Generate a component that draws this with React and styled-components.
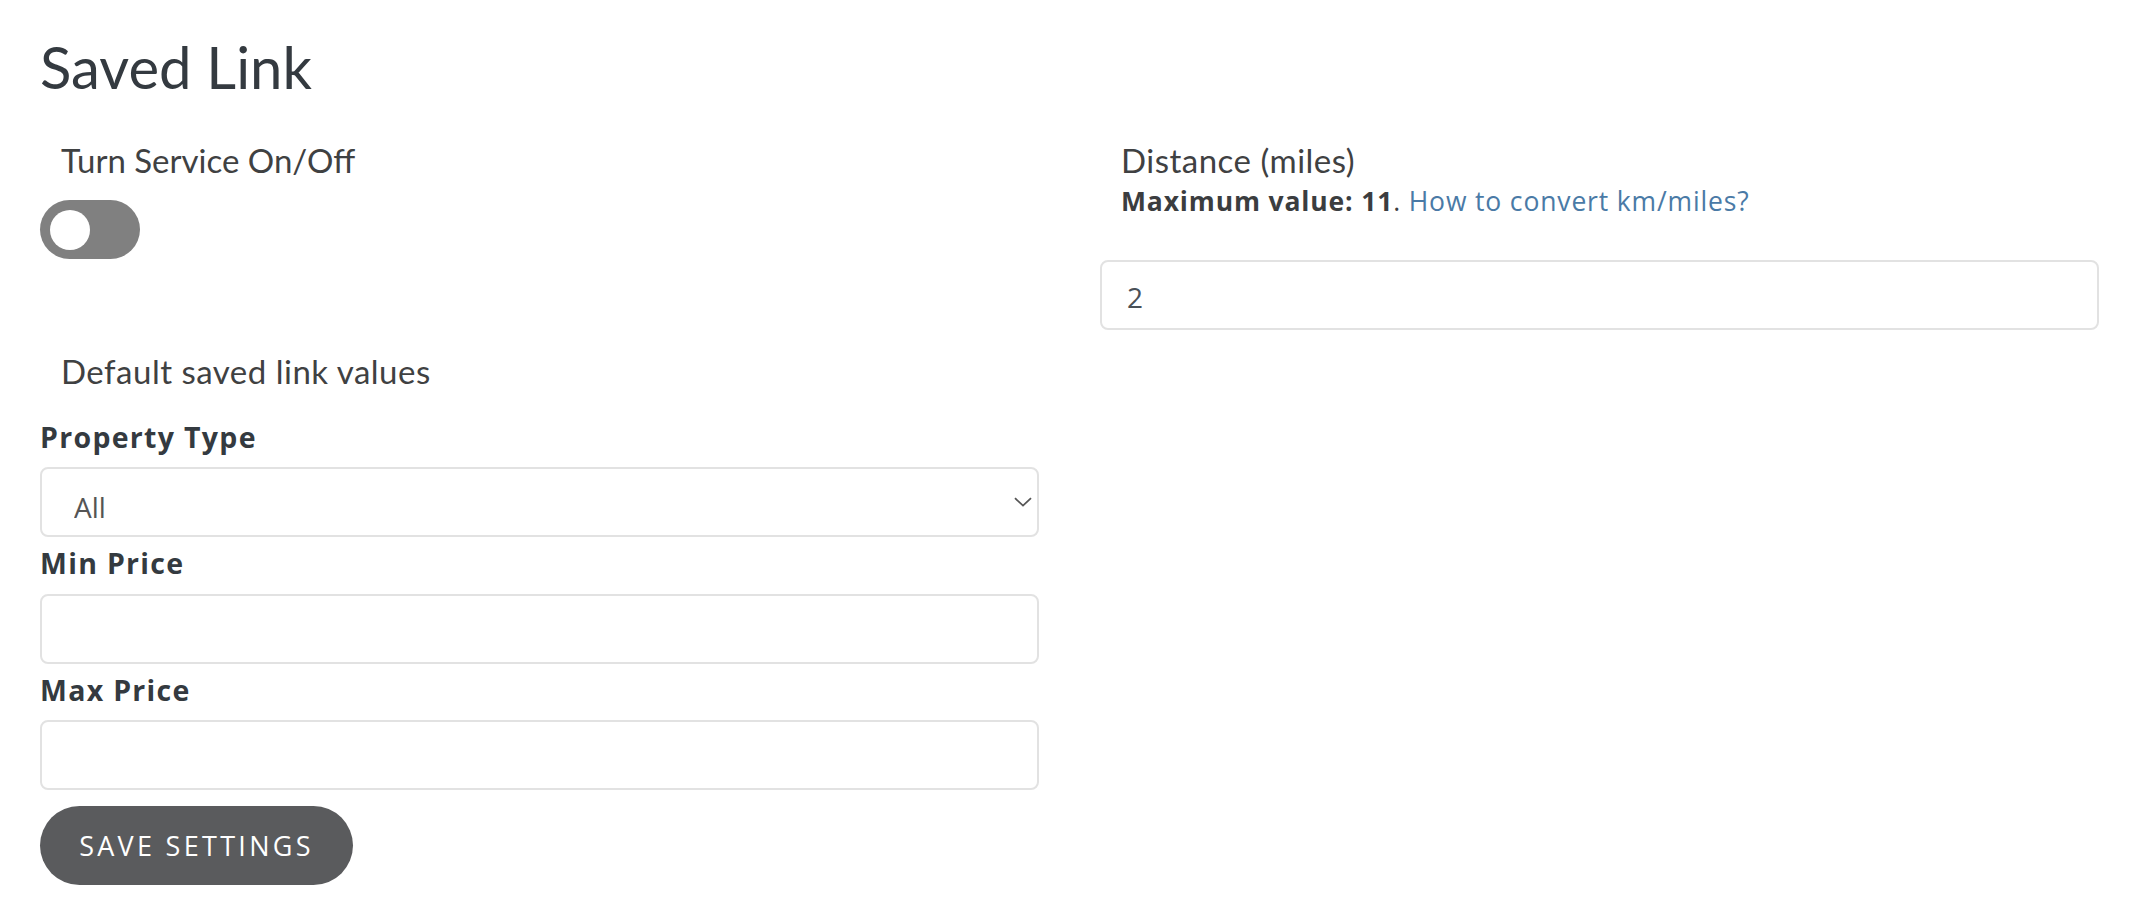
import React, { useState } from "react";
import styled, { createGlobalStyle } from "styled-components";

const GlobalStyle = createGlobalStyle`
  html, body {
    margin: 0;
    padding: 0;
    background: #ffffff;
  }
  body {
    font-family: Lato, "Liberation Sans", sans-serif;
    color: #343a40;
  }
`;

const Page = styled.div`
  padding: 32px 43px 30px 40px;
`;

const Title = styled.h1`
  margin: 0;
  font-family: Lato, "Liberation Sans", sans-serif;
  font-weight: 400;
  font-size: 58px;
  line-height: 1.2;
  color: #343a40;
`;

const Columns = styled.div`
  display: grid;
  grid-template-columns: 1fr 1fr;
  column-gap: 61px;
  margin-top: 39px;
  align-items: start;
`;

const Column = styled.div`
  display: flex;
  flex-direction: column;
`;

const SectionHeading = styled.h4`
  margin: ${(p) => p.$top || 0}px 0 0 21px;
  font-family: Lato, "Liberation Sans", sans-serif;
  font-weight: 400;
  font-size: 33px;
  line-height: 1.16;
  letter-spacing: ${(p) => (p.$wide ? "0.5px" : "0")};
  color: #3f4142;
`;

const Switch = styled.button`
  position: relative;
  width: 100px;
  height: 59px;
  margin-top: 21px;
  padding: 0;
  border: none;
  border-radius: 30px;
  background: ${(p) => (p.$on ? "#5a5b5d" : "#808080")};
  cursor: pointer;

  &::after {
    content: "";
    position: absolute;
    top: 10px;
    left: ${(p) => (p.$on ? "50px" : "10px")};
    width: 40px;
    height: 40px;
    border-radius: 50%;
    background: #ffffff;
  }
`;

const Field = styled.div`
  display: flex;
  flex-direction: column;
  margin-bottom: 9px;
  &:first-of-type {
    margin-top: 30px;
  }
`;

const Label = styled.label`
  font-family: "Open Sans", "Liberation Sans", sans-serif;
  font-weight: 700;
  font-size: 28.5px;
  line-height: 1.2;
  letter-spacing: 1.3px;
  color: #343a40;
  margin-bottom: 13px;
`;

const inputBase = `
  box-sizing: border-box;
  width: 100%;
  height: 70px;
  border: 2px solid #e2e2e2;
  border-radius: 8px;
  background: #ffffff;
  font-family: "Open Sans", "Liberation Sans", sans-serif;
  font-size: 28px;
  outline: none;
`;

const TextInput = styled.input`
  ${inputBase}
  padding: 4px 25px 0;
  color: #495057;
`;

const SelectWrap = styled.div`
  position: relative;
`;

const Select = styled.select`
  ${inputBase}
  appearance: none;
  -webkit-appearance: none;
  padding: 10px 30px 0 32px;
  color: #555555;
`;

const Chevron = styled.svg`
  position: absolute;
  right: 7px;
  top: 30px;
  width: 18px;
  height: 10px;
  pointer-events: none;
`;

const SaveButton = styled.button`
  width: 313px;
  height: 79px;
  margin-top: 7px;
  border: none;
  border-radius: 40px;
  background: #5a5b5d;
  color: #ffffff;
  font-family: "Open Sans", "Liberation Sans", sans-serif;
  font-size: 27px;
  letter-spacing: 3.3px;
  text-transform: uppercase;
  cursor: pointer;
`;

const Hint = styled.p`
  margin: 7px 0 0 21px;
  font-family: "Open Sans", "Liberation Sans", sans-serif;
  font-size: 26.5px;
  line-height: 1.2;
  letter-spacing: 0.85px;
  color: #3b3d3f;

  strong {
    font-weight: 700;
  }
`;

const HelpLink = styled.a`
  color: #4a7aa6;
  text-decoration: none;
`;

const DistanceInput = styled(TextInput)`
  margin-top: 42px;
`;

export default function App() {
  const [enabled, setEnabled] = useState(false);

  return (
    <>
      <GlobalStyle />
      <Page>
        <Title>Saved Link</Title>
        <Columns>
          <Column>
            <SectionHeading>Turn Service On/Off</SectionHeading>
            <Switch
              type="button"
              aria-label="Turn Service On/Off"
              $on={enabled}
              onClick={() => setEnabled(!enabled)}
            />

            <SectionHeading $top={93} $wide>
              Default saved link values
            </SectionHeading>

            <Field>
              <Label htmlFor="property-type">Property Type</Label>
              <SelectWrap>
                <Select id="property-type" defaultValue="all">
                  <option value="all">All</option>
                  <option value="house">House</option>
                  <option value="condo">Condo</option>
                </Select>
                <Chevron viewBox="0 0 18 10" fill="none">
                  <path d="M1 1.2 L9 8.6 L17 1.2" stroke="#555" strokeWidth="1.8" />
                </Chevron>
              </SelectWrap>
            </Field>

            <Field>
              <Label htmlFor="min-price">Min Price</Label>
              <TextInput id="min-price" type="text" />
            </Field>

            <Field>
              <Label htmlFor="max-price">Max Price</Label>
              <TextInput id="max-price" type="text" />
            </Field>

            <div>
              <SaveButton type="button">Save Settings</SaveButton>
            </div>
          </Column>

          <Column>
            <SectionHeading $wide>Distance (miles)</SectionHeading>
            <Hint>
              <strong>Maximum value: 11</strong>.{" "}
              <HelpLink href="#">How to convert km/miles?</HelpLink>
            </Hint>
            <DistanceInput type="text" defaultValue="2" />
          </Column>
        </Columns>
      </Page>
    </>
  );
}
